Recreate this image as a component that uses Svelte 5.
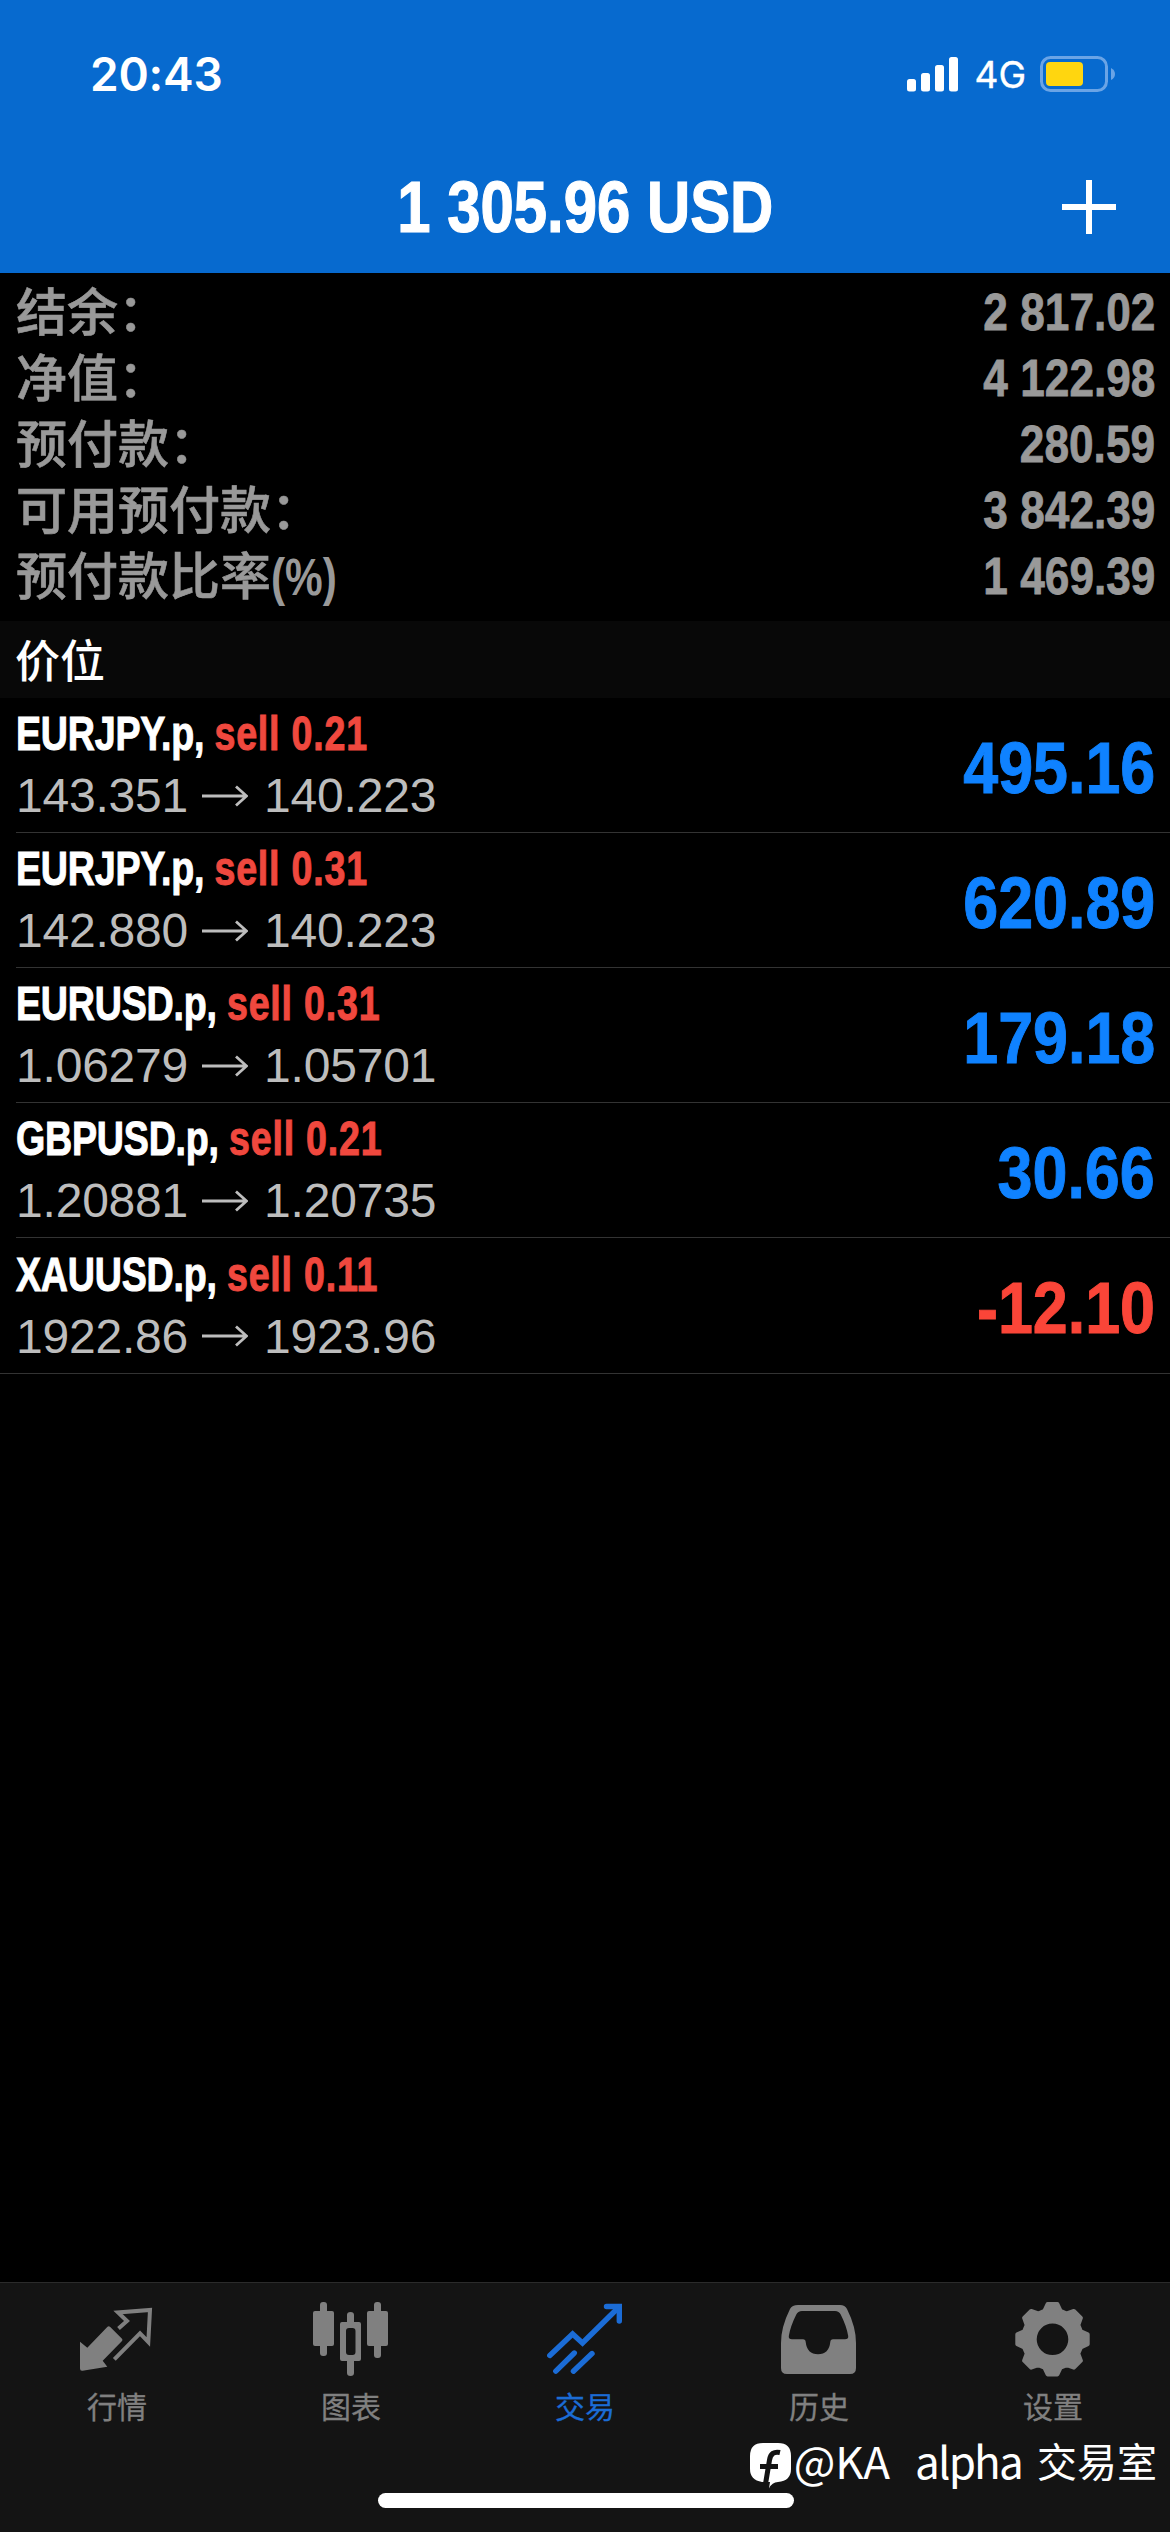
<script lang="ts">
  type Position = { symbol: string; side: string; volume: string; open: string; current: string; profit: string };

  const balance = '1 305.96 USD';

  const summary = [
    { label: '结余：', unit: '', value: '2 817.02' },
    { label: '净值：', unit: '', value: '4 122.98' },
    { label: '预付款：', unit: '', value: '280.59' },
    { label: '可用预付款：', unit: '', value: '3 842.39' },
    { label: '预付款比率', unit: '(%)', value: '1 469.39' },
  ];

  const positions: Position[] = [
    { symbol: 'EURJPY.p', side: 'sell', volume: '0.21', open: '143.351', current: '140.223', profit: '495.16' },
    { symbol: 'EURJPY.p', side: 'sell', volume: '0.31', open: '142.880', current: '140.223', profit: '620.89' },
    { symbol: 'EURUSD.p', side: 'sell', volume: '0.31', open: '1.06279', current: '1.05701', profit: '179.18' },
    { symbol: 'GBPUSD.p', side: 'sell', volume: '0.21', open: '1.20881', current: '1.20735', profit: '30.66' },
    { symbol: 'XAUUSD.p', side: 'sell', volume: '0.11', open: '1922.86', current: '1923.96', profit: '-12.10' },
  ];

  const tabs = [
    { id: 'quotes', label: '行情' },
    { id: 'chart', label: '图表' },
    { id: 'trade', label: '交易' },
    { id: 'history', label: '历史' },
    { id: 'settings', label: '设置' },
  ];

  let active = $state('trade');

  // eight-tooth gear outline
  function gearPoints(cx: number, cy: number) {
    const steps = [[-16, 29.5], [-8, 35.5], [8, 35.5], [16, 29.5]];
    const points: string[] = [];
    for (let i = 0; i < 8; i++) {
      for (const [offset, r] of steps) {
        const a = ((i * 45 + offset) * Math.PI) / 180;
        points.push(`${(cx + r * Math.sin(a)).toFixed(1)},${(cy - r * Math.cos(a)).toFixed(1)}`);
      }
    }
    return points.join(' ');
  }
</script>

<div class="screen">
  <header>
    <div class="status-bar">
      <span class="time">20:43</span>
      <div class="status-icons">
        <svg class="signal" width="51" height="35" viewBox="0 0 51 35">
          <rect x="0" y="22" width="9" height="12.5" rx="2.5" />
          <rect x="14" y="16" width="9" height="18.5" rx="2.5" />
          <rect x="28" y="8" width="9" height="26.5" rx="2.5" />
          <rect x="42" y="0" width="9" height="34.5" rx="2.5" />
        </svg>
        <span class="network">4G</span>
        <svg class="battery" width="76" height="36" viewBox="0 0 76 36">
          <rect x="1.5" y="1.5" width="65" height="33" rx="9" fill="none" stroke="#6aa4e6" stroke-width="3" />
          <rect x="6" y="6" width="37" height="24" rx="4" fill="#ffd60f" />
          <path d="M71 12 Q75 14 75 18 Q75 22 71 24 Z" fill="#6aa4e6" />
        </svg>
      </div>
    </div>
    <div class="title-bar">
      <h1>{balance}</h1>
      <button type="button" class="add" aria-label="add">
        <svg width="54" height="54" viewBox="0 0 54 54">
          <path d="M27 0V54M0 27H54" stroke="#fff" stroke-width="6" />
        </svg>
      </button>
    </div>
  </header>

  <section class="summary">
    {#each summary as row}
      <div class="summary-row">
        <span class="label">{row.label}{#if row.unit}<span class="unit">{row.unit}</span>{/if}</span>
        <span class="value">{row.value}</span>
      </div>
    {/each}
  </section>

  <div class="section-title">价位</div>

  <ul class="positions">
    {#each positions as p}
      <li>
        <div class="deal">
          <div class="symbol">{p.symbol}, <span>{p.side} {p.volume}</span></div>
          <div class="prices">
            <span>{p.open}</span>
            <svg width="46" height="22" viewBox="0 0 46 22">
              <path d="M0 11H44M34 1.5L44.5 11L34 20.5" fill="none" stroke="#bdbdbd" stroke-width="2.8" />
            </svg>
            <span>{p.current}</span>
          </div>
        </div>
        <div class="profit" class:loss={p.profit.startsWith('-')}>{p.profit}</div>
      </li>
    {/each}
  </ul>

  <footer>
    <nav>
      {#each tabs as tab}
        <button type="button" class="tab" class:active={tab.id === active} onclick={() => (active = tab.id)}>
          <svg width="76" height="76" viewBox="0 0 76 76" fill="currentColor">
            {#if tab.id === 'quotes'}
              <path d="M1 40.7L8.3 46.7L28.5 25.8Q29.7 24.6 31 25.8L43 37.8Q44 39 43 40L23.7 59.7L28.3 65.7L3.5 69.7Q1 70 1 67.5Z" />
              <path d="M39.5 27.5L48 20L39 11.5L71 9L69.3 41L61 32.3L35.3 58.3" fill="none" stroke="currentColor" stroke-width="4" />
            {:else if tab.id === 'chart'}
              <rect x="7" y="1" width="7" height="54" rx="3" />
              <rect x="0" y="10" width="21" height="35" rx="2" />
              <rect x="61" y="1" width="7" height="56" rx="3" />
              <rect x="54" y="10" width="21" height="35" rx="2" />
              <path d="M34 21V14Q34 11 37.5 11Q41 11 41 14V21H46Q48 21 48 23V58Q48 60 46 60H41V72Q41 75 37.5 75Q34 75 34 72V60H29Q27 60 27 58V23Q27 21 29 21ZM36 27Q33 27 33 30V51Q33 54 36 54H39.5Q42.5 54 42.5 51V30Q42.5 27 39.5 27Z" fill-rule="evenodd" />
            {:else if tab.id === 'trade'}
              <g fill="none" stroke="currentColor" stroke-width="5.4" stroke-linecap="round">
                <path d="M2.8 54.5L25.6 33L35.5 42L71 7" />
                <path d="M59.5 5.5H72.3V20" />
                <path d="M8.8 70.2L27.3 52M26.4 70.2L45 52.5" />
              </g>
            {:else if tab.id === 'history'}
              <path d="M17 4H59Q64 4 66 8Q75 26 75 42V67Q75 73 69 73H6Q0 73 0 67V42Q0 26 9 8Q11 4 17 4ZM21 10Q17 10 15.3 13.5Q9.5 25 7.8 35Q7.4 38.3 11 38.3H22Q24.5 38.3 24.7 41Q26 53.3 37 53.3Q48 53.3 49.3 41Q49.5 38.3 52 38.3H64Q67.6 38.3 67.2 35Q65.5 25 59.7 13.5Q58 10 54 10Z" fill-rule="evenodd" />
            {:else}
              <path
                d="M{gearPoints(37.5, 38.3)}ZM21.7 38.3a15.8 15.8 0 1 0 31.6 0a15.8 15.8 0 1 0 -31.6 0Z"
                fill-rule="evenodd"
              />
              <polygon points={gearPoints(37.5, 38.3)} fill="none" stroke="currentColor" stroke-width="4" stroke-linejoin="round" />
            {/if}
          </svg>
          <span>{tab.label}</span>
        </button>
      {/each}
    </nav>
    <div class="home-indicator"></div>

    <div class="watermark">
      <svg width="41" height="46" viewBox="0 0 41 46">
        <path d="M13 0H28Q41 0 41 13V26Q41 38 28 39Q22 39 19 45.5L20 39H12Q0 37 0 26V13Q0 0 13 0Z" fill="#fff" />
        <path d="M30 9.5Q21 7.5 19.5 17L15.5 41M10 23.5H28" fill="none" stroke="#141414" stroke-width="5" />
      </svg>
      <span class="handle">@KA</span>
      <span class="nick">alpha</span>
      <span class="room">交易室</span>
    </div>
  </footer>
</div>

<style>
  :global(body) { margin: 0; background: #000; }
  .screen { display: flex; flex-direction: column; width: 1170px; height: 2532px; overflow: hidden; background: #000; color: #fff; font-family: "Liberation Sans", "Noto Sans CJK SC", sans-serif; }

  header { height: 273px; background: #076acf; }
  .status-bar { display: flex; justify-content: space-between; align-items: center; height: 148px; padding: 0 54px 0 90px; box-sizing: border-box; font-family: Inter, sans-serif; }
  .time { font-size: 46px; font-weight: 600; letter-spacing: -0.2px; line-height: 56px; }
  .status-icons { display: flex; align-items: center; }
  .signal { fill: #fff; }
  .network { margin: 2px 14px 0 16px; font-size: 37px; font-weight: 400; line-height: 44px; -webkit-text-stroke: 0.4px #fff; }
  .title-bar { display: grid; grid-template-columns: 1fr auto 1fr; align-items: center; height: 117px; }
  h1 { grid-column: 2; margin: 1px 0 0; font-size: 73px; line-height: 84px; font-weight: 700; white-space: nowrap; transform: scaleX(0.82); -webkit-text-stroke: 1.2px #fff; }
  .add { justify-self: end; display: block; margin-right: 54px; padding: 0; border: none; background: none; line-height: 0; }

  .summary { display: flex; flex-direction: column; height: 348px; padding: 6px 15px 0 16px; box-sizing: border-box; color: #999; }
  .summary-row { display: flex; justify-content: space-between; align-items: center; height: 66px; }
  .label { display: flex; margin-top: 4px; font-size: 51px; line-height: 60px; font-weight: 500; -webkit-text-stroke: 0.6px #999; }
  .unit { font-weight: 700; transform: scaleX(0.83); transform-origin: left; -webkit-text-stroke: 0; }
  .value { font-size: 52px; line-height: 60px; font-weight: 700; transform: scaleX(0.85); transform-origin: right; -webkit-text-stroke: 0.8px #999; }

  .section-title { height: 77px; padding-left: 15px; background: #080808; font-family: "Noto Sans CJK SC", sans-serif; font-size: 45px; line-height: 75px; font-weight: 500; }

  .positions { margin: 0; padding: 0; list-style: none; }
  li { display: flex; justify-content: space-between; align-items: center; height: 135px; margin-left: 16px; padding-right: 15px; box-sizing: border-box; border-bottom: 1px solid #333; }
  li:last-child { margin-left: 0; padding-left: 16px; height: 136px; }
  .symbol { width: max-content; font-size: 49px; line-height: 61px; font-weight: 700; letter-spacing: -0.3px; transform: scaleX(0.768); transform-origin: left; white-space: nowrap; -webkit-text-stroke: 1px currentColor; }
  .symbol span { color: #f0483e; letter-spacing: 1px; }
  .prices { display: flex; align-items: center; font-size: 48px; line-height: 63px; letter-spacing: -0.2px; color: #bdbdbd; }
  .prices svg { margin: 0 16px 0 14px; }
  .profit { margin-top: 5px; font-size: 73px; line-height: 84px; font-weight: 700; color: #0f82ff; transform: scaleX(0.86); transform-origin: right; -webkit-text-stroke: 1px currentColor; }
  .profit.loss { color: #fa4538; }

  footer { position: relative; display: flex; flex-direction: column; justify-content: space-between; align-items: center; height: 250px; margin-top: auto; padding-bottom: 24px; box-sizing: border-box; border-top: 1px solid #2b2b2b; background: #141414; }
  nav { display: flex; width: 100%; }
  .tab { flex: 1; display: flex; flex-direction: column; align-items: center; padding: 18px 0 0; border: none; background: none; color: #808080; }
  .tab span { margin-top: 6px; font-family: "Noto Sans CJK SC", sans-serif; font-size: 30px; line-height: 44px; -webkit-text-stroke: 0.3px currentColor; }
  .tab.active { color: #1b6cd6; }
  .home-indicator { width: 416px; height: 15px; margin-left: 2px; border-radius: 8px; background: #fff; }

  .watermark { position: absolute; right: 13px; top: 147px; display: flex; align-items: center; height: 60px; font-family: "Noto Sans CJK SC", sans-serif; font-weight: 400; font-size: 44px; line-height: 60px; }
  .watermark svg { margin: 11px 3px 0 0; }
  .nick { margin: 0 15px 0 25px; letter-spacing: -1.8px; }
  .room { font-size: 40px; }
</style>
